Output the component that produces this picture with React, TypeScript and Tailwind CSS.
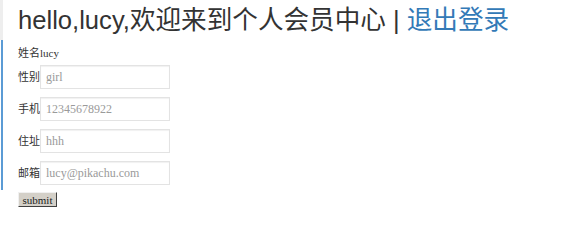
const fields = [
  { label: "性别", value: "girl" },
  { label: "手机", value: "12345678922" },
  { label: "住址", value: "hhh" },
  { label: "邮箱", value: "lucy@pikachu.com" },
];

export default function App() {
  return (
    <div className="relative h-[222px] w-[568px] overflow-hidden bg-white font-['Liberation_Sans','Noto_Sans_CJK_SC',sans-serif]">
      {/* left edge strip */}
      <div className="absolute left-0 top-0 h-[40px] w-[3px] bg-[#eeeeee]" />
      <div className="absolute left-[1px] top-[40px] h-[150px] w-[2px] bg-[#5b9bd5]" />

      <div className="pl-[18px]">
        <h1 className="whitespace-nowrap pt-[4px] text-[25.6px] leading-[32px] text-[#333333]">
          hello,lucy,欢迎来到个人会员中心 | <a className="text-[#337ab7]">退出登录</a>
        </h1>

        <div className="mt-[9px] flex items-center whitespace-nowrap text-[11px] leading-[16px] text-[#333333]">
          <span>姓名</span>
          <span className="font-['Liberation_Serif',serif] text-[11px]">lucy</span>
        </div>

        <div className="mt-[4px] flex flex-col gap-[8px]">
          {fields.map((f) => (
            <div key={f.label} className="flex items-center">
              <span className="w-[22px] shrink-0 whitespace-nowrap text-[11px] text-[#333333]">{f.label}</span>
              <div className="flex h-[24px] w-[130px] shrink-0 items-center border border-[#e3e3e3] pl-[5px] font-['Liberation_Serif',serif] text-[12px] text-[#9a9a9a] shadow-[inset_0_1px_1px_rgba(0,0,0,0.06)]">
                {f.value}
              </div>
            </div>
          ))}
        </div>

        <button className="mt-[7px] h-[15px] w-[39px] border border-t-[#f0f0f0] border-l-[#f0f0f0] border-r-[#404040] border-b-[#404040] bg-[#d4d0c8] font-['Liberation_Serif',serif] text-[11px] font-normal leading-[12px] text-[#222222]">
          submit
        </button>
      </div>
    </div>
  );
}
